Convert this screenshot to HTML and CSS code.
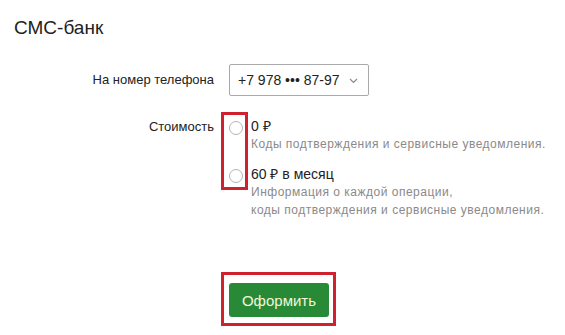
FILE: index.html
```html
<!DOCTYPE html>
<html lang="ru">
   <head>
      <meta charset="utf-8">
      <title>СМС-банк</title>
      <link rel="stylesheet" href="styles.css">
   </head>
   <body>
      <div class="page">
      	<h1 class="title">СМС-банк</h1>

      	<div class="form">
      		<div class="label phone-label">На номер телефона</div>
      		<div class="select">
      			<span>+7 978 ••• 87-97</span>
      			<svg class="chevron" width="9" height="6" viewBox="0 0 9 6">
      				<path d="M1 1 L4.5 4.5 L8 1" fill="none" stroke="#8a8a8a" stroke-width="1.2"/>
      			</svg>
      		</div>

      		<div class="label cost-label">Стоимость</div>
      		<div class="options">
      			<div class="option">
      				<span class="radio"></span>
      				<div class="option-text">
      					<div class="option-title">0 ₽</div>
      					<div class="option-desc">Коды подтверждения и сервисные уведомления.</div>
      				</div>
      			</div>
      			<div class="option">
      				<span class="radio"></span>
      				<div class="option-text">
      					<div class="option-title">60 ₽ в месяц</div>
      					<div class="option-desc">Информация о каждой операции,<br>коды подтверждения и сервисные уведомления.</div>
      				</div>
      			</div>
      		</div>

      		<div class="spacer"></div>
      		<div class="submit-wrap">
      			<button class="submit">Оформить</button>
      		</div>
      	</div>
      </div>
   </body>
</html>
```

FILE: styles.css
```css
body{
	margin:0;
	padding:0;
	background:#fff;
	font-family:"Liberation Sans", Arial, sans-serif;
	color:#222;
}
.page{
	padding:17px 0 0 14px;
}
.title{
	margin:0;
	font-size:19px;
	font-weight:normal;
	line-height:22px;
}
.form{
	display:grid;
	grid-template-columns:200px auto;
	column-gap:15px;
	margin-top:25px;
	align-items:start;
}
.label{
	text-align:right;
	font-size:13px;
	line-height:18px;
	color:#222;
}
.phone-label{
	align-self:center;
}
.cost-label{
	margin-top:22px;
}
.select{
	justify-self:start;
	display:flex;
	align-items:center;
	box-sizing:border-box;
	width:140px;
	height:32px;
	padding:0 10px 0 8px;
	border:1px solid #a9a9a9;
	border-radius:2px;
	font-size:14px;
	color:#222;
}
.select span{
	flex:1;
}
.chevron{
	margin-top:2px;
}
.options{
	position:relative;
	margin-top:21px;
	display:flex;
	flex-direction:column;
	gap:12px;
}
.options:before{
	content:'';
	position:absolute;
	left:-8px;
	top:-5px;
	width:21px;
	height:72px;
	border:3px solid #d0222e;
}
.option{
	display:flex;
	gap:8px;
}
.radio{
	flex:none;
	width:12px;
	height:12px;
	margin-top:4px;
	border:1px solid #b4b4b4;
	border-radius:50%;
}
.option-title{
	font-size:14px;
	line-height:18px;
	color:#222;
}
.option-desc{
	font-size:12px;
	line-height:18px;
	color:#8a8a8a;
	letter-spacing:0.5px;
}
.submit-wrap{
	justify-self:start;
	margin:53px 0 0 -8px;
	padding:8px 4px 6px 5px;
	border:3px solid #d0222e;
}
.submit{
	display:block;
	width:100px;
	height:34px;
	border:none;
	border-radius:3px;
	background:#288a37;
	color:#f2f7dc;
	font-family:"Liberation Sans", Arial, sans-serif;
	font-size:15px;
}
```
